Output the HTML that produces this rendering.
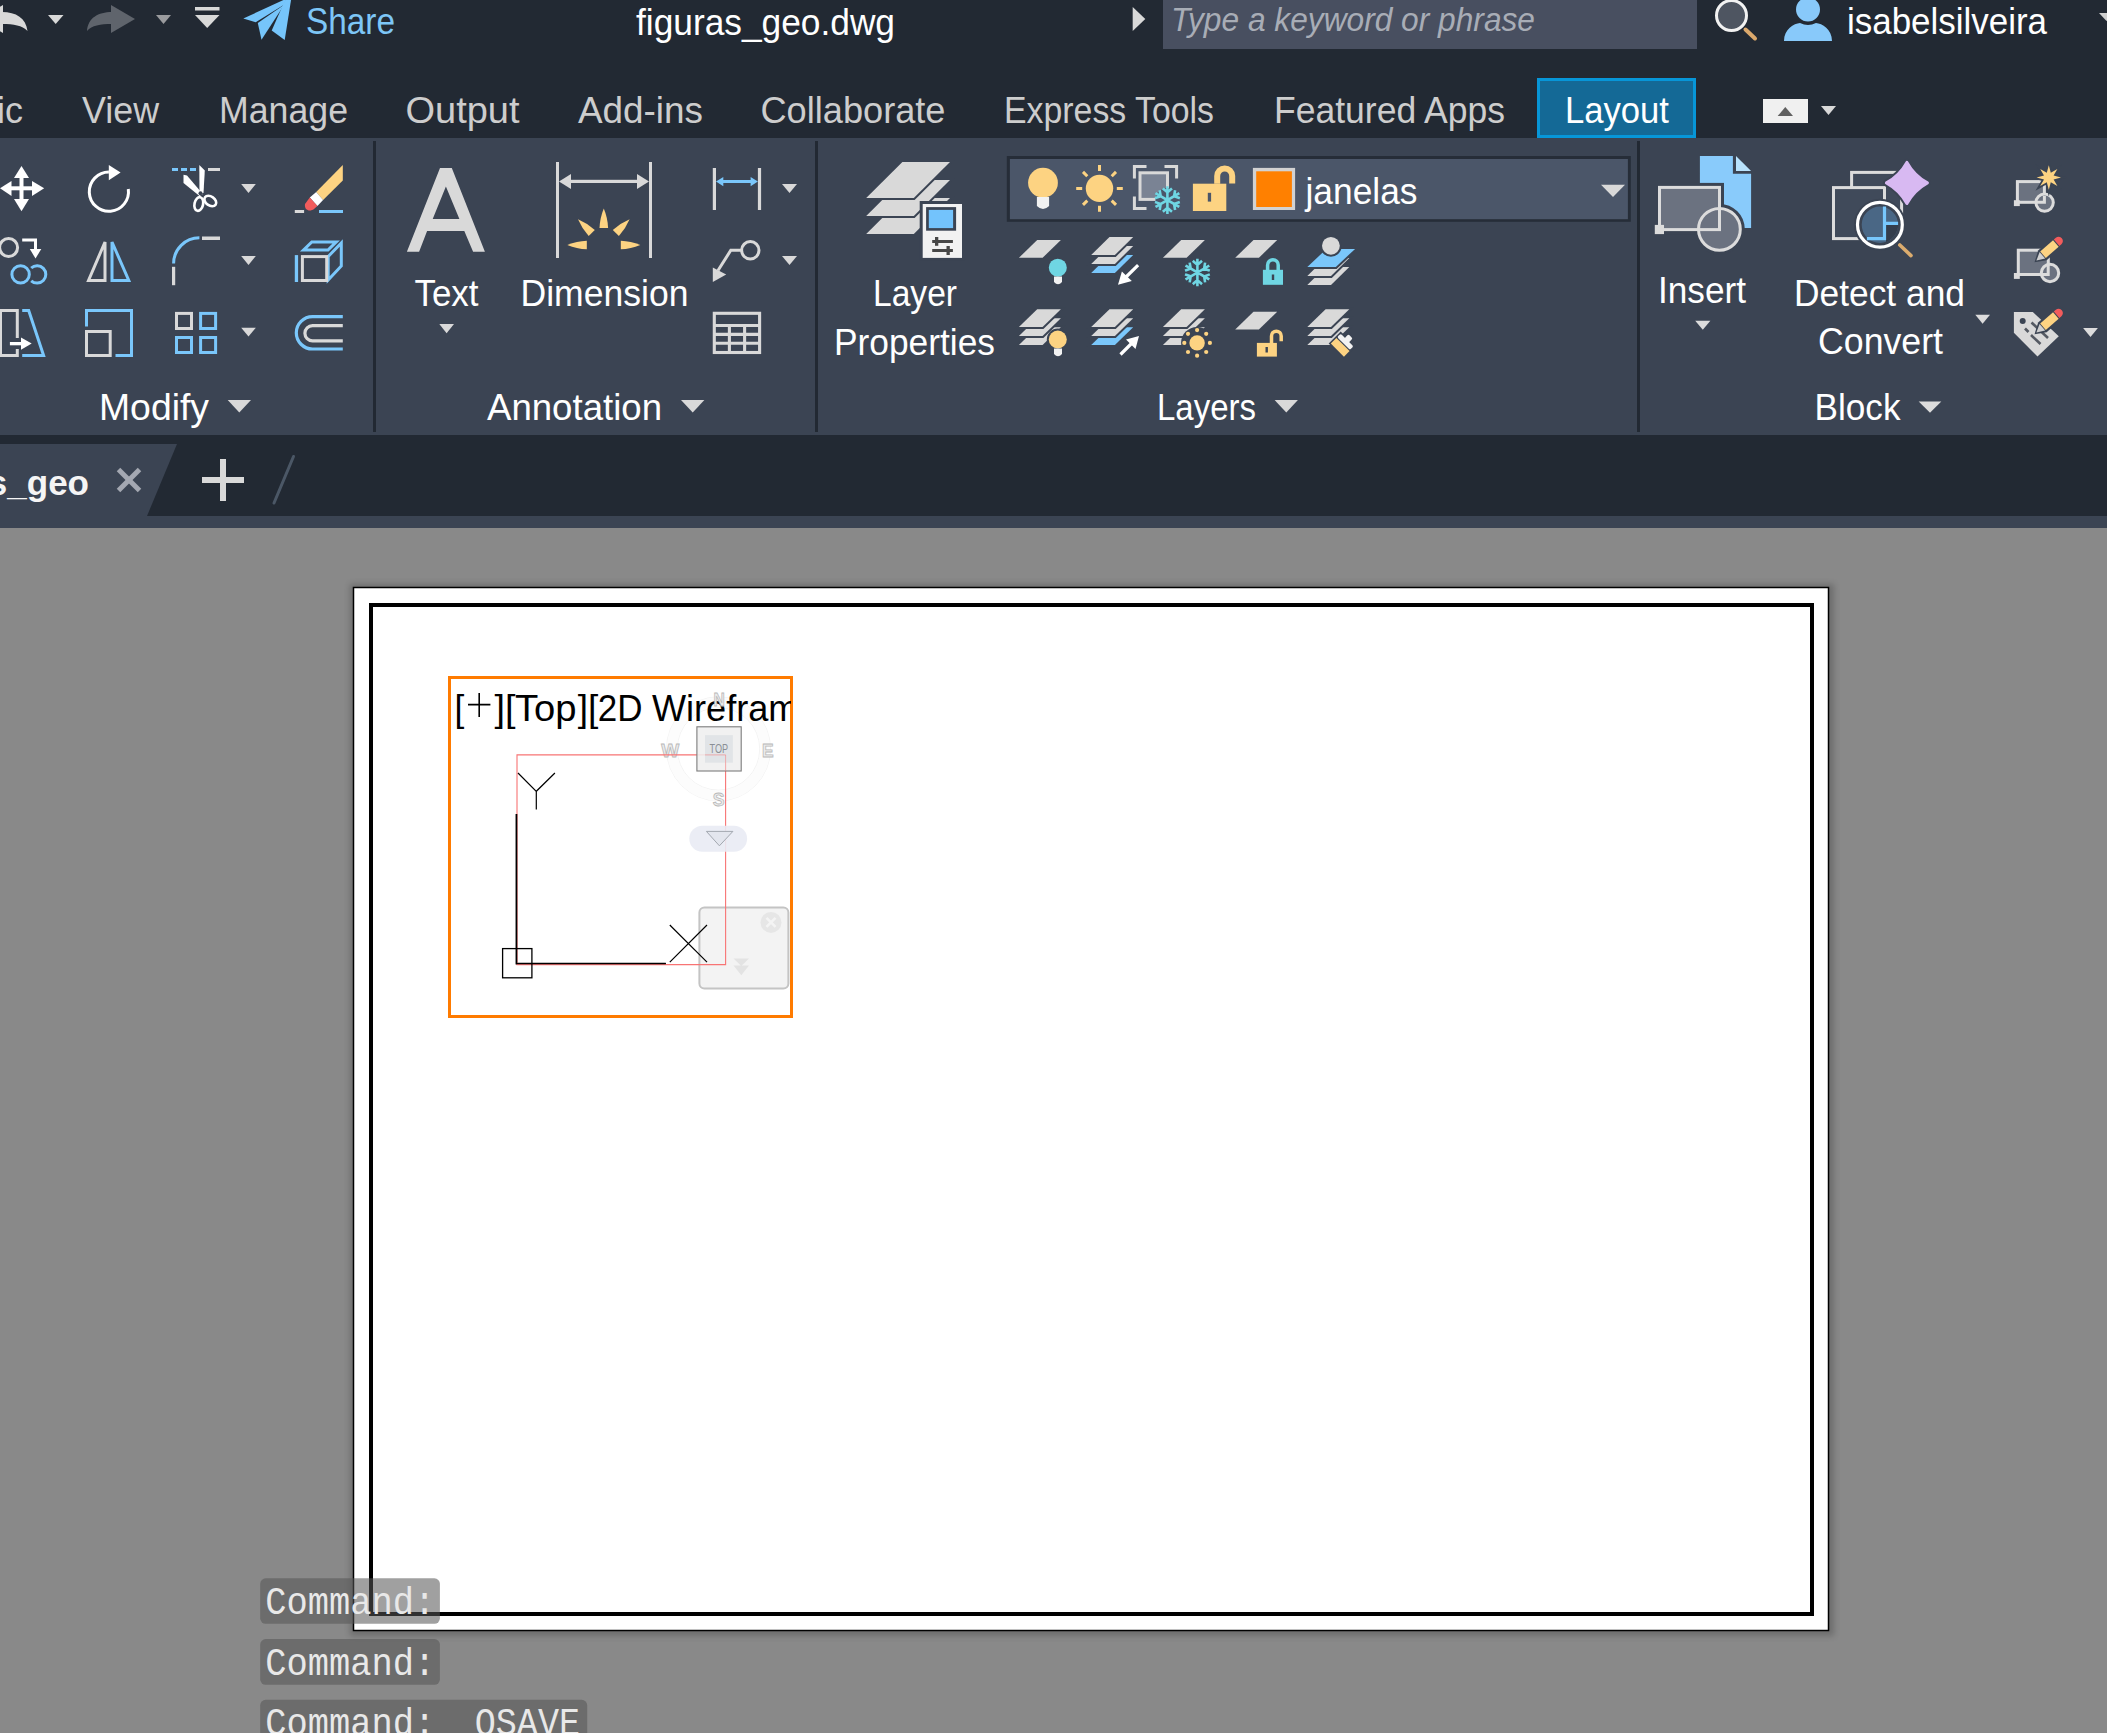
<!DOCTYPE html>
<html><head><meta charset="utf-8">
<style>
html,body{margin:0;padding:0;width:2107px;height:1733px;overflow:hidden;background:#898989;}
svg{position:absolute;left:0;top:0;display:block}
text{font-family:"Liberation Sans",sans-serif}
.mono text{font-family:"Liberation Mono",monospace}
</style></head>
<body>
<svg width="2107" height="1733" viewBox="0 0 2107 1733">
<defs>
  <filter id="sh" x="-5%" y="-5%" width="110%" height="110%"><feGaussianBlur stdDeviation="3"/></filter>
</defs>
<!-- backgrounds -->
<rect x="0" y="0" width="2107" height="138" fill="#222933"/>
<rect x="0" y="138" width="2107" height="297" fill="#3b4453"/>
<rect x="0" y="435" width="2107" height="81" fill="#222933"/>
<rect x="0" y="516" width="2107" height="12" fill="#3b4453"/>
<rect x="0" y="528" width="2107" height="1205" fill="#898989"/>


<!-- title row -->
<g id="title">
<text x="306" y="34" font-size="37" fill="#7dc6f7" textLength="89" lengthAdjust="spacingAndGlyphs">Share</text>
<text x="636" y="34.5" font-size="36" fill="#ffffff" textLength="259" lengthAdjust="spacingAndGlyphs">figuras_geo.dwg</text>
<rect x="1163" y="0" width="534" height="49" fill="#484f60"/>
<text x="1171" y="30.5" font-size="34" font-style="italic" fill="#a8adb6" textLength="364" lengthAdjust="spacingAndGlyphs">Type a keyword or phrase</text>
<text x="1847" y="34" font-size="36" fill="#ffffff" textLength="200" lengthAdjust="spacingAndGlyphs">isabelsilveira</text>
</g>
<!-- tabs -->
<g id="tabs" font-size="37.5" fill="#cdcdcd">
<text x="-3" y="123" textLength="26" lengthAdjust="spacingAndGlyphs">ic</text>
<text x="82" y="123" textLength="77" lengthAdjust="spacingAndGlyphs">View</text>
<text x="219" y="123" textLength="129" lengthAdjust="spacingAndGlyphs">Manage</text>
<text x="405.5" y="123" textLength="114" lengthAdjust="spacingAndGlyphs">Output</text>
<text x="578" y="123" textLength="125" lengthAdjust="spacingAndGlyphs">Add-ins</text>
<text x="760.5" y="123" textLength="185" lengthAdjust="spacingAndGlyphs">Collaborate</text>
<text x="1004" y="123" textLength="210" lengthAdjust="spacingAndGlyphs">Express Tools</text>
<text x="1274" y="123" textLength="231" lengthAdjust="spacingAndGlyphs">Featured Apps</text>
<rect x="1538.5" y="79.5" width="156" height="57" fill="#146996" stroke="#0796d8" stroke-width="3"/>
<text x="1565" y="123" fill="#ffffff" textLength="104" lengthAdjust="spacingAndGlyphs">Layout</text>
</g>
<!-- ribbon labels -->
<g id="labels" font-size="37" fill="#ffffff">
<text x="414.5" y="306" textLength="64" lengthAdjust="spacingAndGlyphs">Text</text>
<text x="520.5" y="306" textLength="168" lengthAdjust="spacingAndGlyphs">Dimension</text>
<text x="873" y="306" textLength="84" lengthAdjust="spacingAndGlyphs">Layer</text>
<text x="834" y="354.5" textLength="161" lengthAdjust="spacingAndGlyphs">Properties</text>
<text x="1658" y="302.5" textLength="88" lengthAdjust="spacingAndGlyphs">Insert</text>
<text x="1794" y="305.7" textLength="171" lengthAdjust="spacingAndGlyphs">Detect and</text>
<text x="1818" y="354" textLength="125" lengthAdjust="spacingAndGlyphs">Convert</text>
<text x="99" y="419.5" textLength="110" lengthAdjust="spacingAndGlyphs">Modify</text>
<text x="487" y="419.5" textLength="175" lengthAdjust="spacingAndGlyphs">Annotation</text>
<text x="1157" y="419.5" textLength="99" lengthAdjust="spacingAndGlyphs">Layers</text>
<text x="1814.5" y="419.6" textLength="86" lengthAdjust="spacingAndGlyphs">Block</text>
</g>


<!-- title icons -->
<g id="ticons">
  <path d="M3,5 L-21,19 L3,33 Z" fill="#d9d9d9"/>
  <path d="M2,12 C16,12 26,18 27.5,31 C22,25.5 14,24 2,24 Z" fill="#d9d9d9"/>
  <path d="M48,15 L63.5,15 L55.7,24 Z" fill="#d9d9d9"/>
  <path d="M111,5 L135,19 L111,33 Z" fill="#5f646c"/>
  <path d="M112,12 C98,12 88,18 87,31 C92,25.5 100,24 112,24 Z" fill="#5f646c"/>
  <path d="M156,15 L171,15 L163.5,24 Z" fill="#9a9b9e"/>
  <rect x="195" y="7" width="24.5" height="3.5" fill="#d9d9d9"/>
  <path d="M195,15 L219.5,15 L207.2,28 Z" fill="#d9d9d9"/>
  <g fill="#76c5fb">
    <path d="M243.3,18.5 L285.6,-1 L284.4,4.6 L255.7,22.2 Z"/>
    <path d="M257.8,23.1 L284.2,4.8 L261.5,39.8 Z"/>
    <path d="M271.7,30.6 L285.6,-1 L291.2,-1 L284.7,40.1 Z"/>
  </g>
  <path d="M1132.7,7 L1145.3,19 L1132.7,31 Z" fill="#d9d9d9"/>
  <circle cx="1731.5" cy="15.5" r="15" fill="#4e5561" stroke="#f2f2f2" stroke-width="3"/>
  <line x1="1745.5" y1="29.5" x2="1755" y2="38.5" stroke="#dba86c" stroke-width="4" stroke-linecap="round"/>
  <circle cx="1808" cy="9.5" r="12" fill="#88c9fa"/>
  <path d="M1784,41 C1784,29 1794,23.5 1800,23 Q1808,27 1816,23 C1822,23.5 1832,29 1832,41 Z" fill="#88c9fa"/>
  <path d="M2099,13 L2114,13 L2106.5,21 Z" fill="#d0d0d0"/>
  <rect x="1763" y="99" width="45" height="24" fill="#f0f0f0"/>
  <path d="M1777.7,116 L1793,116 L1785.3,107 Z" fill="#606060"/>
  <path d="M1821,106 L1836,106 L1828.5,115 Z" fill="#d9d9d9"/>
</g>
<!-- separators -->
<rect x="373" y="141" width="3" height="291" fill="#222933"/>
<rect x="815" y="141" width="3" height="291" fill="#222933"/>
<rect x="1637" y="141" width="3" height="291" fill="#222933"/>
<!-- doc tab -->
<g id="doctab">
  <path d="M0,444 L177,444 L147,516 L0,516 Z" fill="#3b4453"/>
  <text x="89" y="495" font-size="35" font-weight="bold" fill="#f5f5f5" text-anchor="end">s_geo</text>
  <g stroke="#a4a8b2" stroke-width="5">
    <line x1="118.5" y1="469.5" x2="139.5" y2="490.5"/>
    <line x1="139.5" y1="469.5" x2="118.5" y2="490.5"/>
  </g>
  <rect x="220" y="459" width="6" height="42" fill="#d9d9d9"/>
  <rect x="202" y="477" width="42" height="6" fill="#d9d9d9"/>
  <line x1="293.5" y1="456.5" x2="274" y2="503" stroke="#4b5766" stroke-width="3" stroke-linecap="round"/>
</g>


<!-- modify icons -->
<g id="modify">
  <!-- move -->
  <g fill="#ffffff">
    <rect x="19.5" y="176" width="4" height="25"/>
    <rect x="9" y="186.3" width="25" height="4"/>
    <path d="M21.5,165.9 L29,178 L14,178 Z"/>
    <path d="M21.5,211.2 L29,199 L14,199 Z"/>
    <path d="M0,188.3 L11.5,181 L11.5,196 Z"/>
    <path d="M44.2,188.3 L32,181 L32,196 Z"/>
  </g>
  <!-- rotate -->
  <path d="M108.9,172.1 A19.6,19.6 0 1 0 128.3,189" fill="none" stroke="#ffffff" stroke-width="3"/>
  <path d="M108.8,165 L120.6,172.6 L108.8,180.2 Z" fill="#ffffff"/>
  <!-- trim -->
  <g fill="#7ac7fb">
    <rect x="172" y="168" width="6" height="3"/><rect x="181" y="168" width="6" height="3"/><rect x="190" y="168" width="6" height="3"/>
  </g>
  <rect x="208" y="168" width="12" height="3" fill="#d9d9d9"/>
  <g fill="#ffffff">
    <path d="M199.3,165 L204.8,170.5 L203.5,193 L199.5,193 Z"/>
    <path d="M183.5,174.8 L187,175.5 L202.8,194 L199.5,196 L183.5,183 Z"/>
  </g>
  <g fill="none" stroke="#ffffff" stroke-width="2.6">
    <ellipse cx="198.8" cy="204" rx="4.3" ry="7" transform="rotate(12 198.8 204)"/>
    <ellipse cx="210.3" cy="201" rx="4.5" ry="6.5" transform="rotate(-55 210.3 201)"/>
  </g>
  <circle cx="200.5" cy="193.2" r="2" fill="#3b4453"/>
  <!-- erase -->
  <path d="M316.2,191.9 L342.8,165 L342.8,180.5 L323.1,200.1 Z" fill="#fdd382"/>
  <path d="M309.8,197.6 L316.2,191.9 L323.1,200.1 L317.4,205.9 Z" fill="#ffffff"/>
  <path d="M309.8,197.6 L317.4,205.9 L314,209 C310,212 304,210.5 305,204 Z" fill="#f25c5c"/>
  <rect x="294.8" y="210" width="9.3" height="3" fill="#d9d9d9"/>
  <rect x="319" y="210" width="24" height="3" fill="#7ac7fb"/>
  <!-- copy -->
  <circle cx="8.6" cy="247.5" r="9" fill="none" stroke="#d9d9d9" stroke-width="3"/>
  <path d="M22.2,240 L35.5,240 L35.5,250" fill="none" stroke="#ffffff" stroke-width="3"/>
  <path d="M29.8,249 L41.3,249 L35.5,258.5 Z" fill="#ffffff"/>
  <circle cx="20.6" cy="274.4" r="8.7" fill="none" stroke="#7ac7fb" stroke-width="3"/>
  <path d="M31.2,268 A8.7,8.7 0 1 1 31.2,280.8" fill="none" stroke="#7ac7fb" stroke-width="3"/>
  <!-- mirror -->
  <path d="M105,242 L105,280.5 L88.5,280.5 Z" fill="none" stroke="#d9d9d9" stroke-width="3" stroke-linejoin="miter"/>
  <path d="M112,242 L112,280.5 L128.8,280.5 Z" fill="none" stroke="#7ac7fb" stroke-width="3"/>
  <!-- fillet -->
  <path d="M173.6,263.6 A25.8,25.8 0 0 1 199.4,237.8" fill="none" stroke="#7ac7fb" stroke-width="3"/>
  <rect x="202" y="236.5" width="18" height="3.5" fill="#d9d9d9"/>
  <rect x="172" y="266.8" width="3.2" height="18.4" fill="#d9d9d9"/>
  <!-- 3d -->
  <path d="M303.5,250.1 L311.8,241.9 L336.3,241.9 L328,250.1 Z" fill="none" stroke="#7ac7fb" stroke-width="3"/>
  <path d="M328.2,280 L328.2,256.5 L341.3,243 L341.3,266 Z" fill="none" stroke="#7ac7fb" stroke-width="3"/>
  <rect x="294.8" y="255.1" width="3.3" height="26.9" fill="#7ac7fb"/>
  <rect x="302.4" y="256.6" width="24.3" height="23.9" fill="none" stroke="#d9d9d9" stroke-width="3"/>
  <!-- stretch -->
  <path d="M17.3,338 L17.3,310.5 L0.5,310.5 L0.5,355.5 L17.3,355.5 L17.3,349" fill="none" stroke="#d9d9d9" stroke-width="3"/>
  <rect x="9.9" y="342" width="12" height="3.3" fill="#ffffff"/>
  <path d="M31.7,343.6 L21,337.5 L21,349.7 Z" fill="#ffffff"/>
  <path d="M22.2,310.5 L28.7,310.5 L43.6,355.5 L22.2,355.5" fill="none" stroke="#7ac7fb" stroke-width="3"/>
  <!-- scale -->
  <path d="M86.5,326.5 L86.5,310.5 L131.5,310.5 L131.5,355.5 L115.5,355.5" fill="none" stroke="#7ac7fb" stroke-width="3"/>
  <rect x="86.5" y="331.5" width="23.7" height="24" fill="none" stroke="#d9d9d9" stroke-width="3"/>
  <!-- array -->
  <rect x="176.5" y="313.4" width="15" height="15.1" fill="none" stroke="#d9d9d9" stroke-width="3"/>
  <rect x="200.6" y="313.4" width="15" height="15.1" fill="none" stroke="#7ac7fb" stroke-width="3"/>
  <rect x="176.5" y="337.5" width="15" height="15" fill="none" stroke="#7ac7fb" stroke-width="3"/>
  <rect x="200.6" y="337.5" width="15" height="15" fill="none" stroke="#7ac7fb" stroke-width="3"/>
  <!-- offset -->
  <path d="M342.8,316.6 L312.5,316.6 A16.2,16.2 0 0 0 312.5,349 L342.8,349" fill="none" stroke="#7ac7fb" stroke-width="3.2"/>
  <path d="M342.8,325.6 L312.5,325.6 A7.6,7.6 0 0 0 312.5,340.8 L342.8,340.8" fill="none" stroke="#d9d9d9" stroke-width="3.2"/>
  <!-- dropdowns -->
  <g fill="#d9d9d9">
    <path d="M241.2,184 L255.8,184 L248.5,193 Z"/>
    <path d="M241.2,256 L255.8,256 L248.5,265 Z"/>
    <path d="M241.2,327.7 L255.8,327.7 L248.5,336.6 Z"/>
    <path d="M227.7,400 L251,400 L239.3,412.4 Z"/>
  </g>
</g>


<!-- annotation icons -->
<g id="annot">
  <path d="M406.9,251.8 L440,168 L451.8,168 L484.9,251.8 L473.1,251.8 L464.3,230.9 L427.1,230.9 L419.1,251.8 Z M432.7,218.9 L459.4,218.9 L445.9,186.5 Z" fill="#d9d9d9" fill-rule="evenodd"/>
  <path d="M439.3,324 L454,324 L446.6,333.2 Z" fill="#d9d9d9"/>
  <rect x="556" y="162" width="3" height="96" fill="#d9d9d9"/>
  <rect x="649" y="162" width="3" height="96" fill="#d9d9d9"/>
  <rect x="565" y="179.8" width="78" height="3.2" fill="#d9d9d9"/>
  <path d="M559,181.5 L571,174 L571,189 Z" fill="#d9d9d9"/>
  <path d="M649,181.5 L637,174 L637,189 Z" fill="#d9d9d9"/>
  <g fill="#fdd382"><path d="M586.8,240.7 Q576.8,241.1 567.3,245.0 Q576.8,248.9 586.8,249.3 Z"/><path d="M594.8,229.9 Q587.4,223.2 578.0,219.2 Q582.0,228.6 588.7,236.0 Z"/><path d="M608.1,228.0 Q607.7,218.0 603.8,208.5 Q599.9,218.0 599.5,228.0 Z"/><path d="M618.9,236.0 Q625.6,228.6 629.6,219.2 Q620.2,223.2 612.8,229.9 Z"/><path d="M620.8,249.3 Q630.8,248.9 640.3,245.0 Q630.8,241.1 620.8,240.7 Z"/></g>
  <!-- linear dim -->
  <rect x="712.8" y="168" width="3.2" height="42" fill="#d9d9d9"/>
  <rect x="757.9" y="168" width="3.2" height="42" fill="#d9d9d9"/>
  <rect x="720" y="180" width="31" height="3" fill="#7ac7fb"/>
  <path d="M716,181.5 L723.3,176.9 L723.3,186.2 Z" fill="#7ac7fb"/>
  <path d="M757.9,181.5 L750.6,176.9 L750.6,186.2 Z" fill="#7ac7fb"/>
  <!-- leader -->
  <circle cx="750.3" cy="250.3" r="8.7" fill="none" stroke="#d9d9d9" stroke-width="3"/>
  <path d="M741.6,250.3 L730.8,250.3 L718,270.5" fill="none" stroke="#d9d9d9" stroke-width="3"/>
  <path d="M712.8,267.4 L712.8,282 L726.2,274.4 Z" fill="#d9d9d9"/>
  <!-- table -->
  <g fill="none" stroke="#d9d9d9" stroke-width="3.1">
    <rect x="714.3" y="313.3" width="45.3" height="39.2"/>
    <line x1="714.3" y1="325.5" x2="759.6" y2="325.5"/>
    <line x1="714.3" y1="334.4" x2="759.6" y2="334.4"/>
    <line x1="714.3" y1="343.3" x2="759.6" y2="343.3"/>
    <line x1="729.4" y1="325.5" x2="729.4" y2="352.5"/>
    <line x1="744.6" y1="325.5" x2="744.6" y2="352.5"/>
  </g>
  <g fill="#d9d9d9">
    <path d="M782,184 L797,184 L789.5,193 Z"/>
    <path d="M782,256 L797,256 L789.5,265 Z"/>
    <path d="M681,400 L704.4,400 L692.7,412.4 Z"/>
  </g>
</g>


<!-- layers group -->
<g id="layers">
  <!-- layer properties -->
  <path d="M866.2,234.0 L902.4,198.1 L950.0,198.1 L913.8,234.0 Z" fill="#d9d9d9" stroke="#3b4453" stroke-width="4" paint-order="stroke"/>
  <path d="M866.2,216.0 L902.4,180.1 L950.0,180.1 L913.8,216.0 Z" fill="#d9d9d9" stroke="#3b4453" stroke-width="4" paint-order="stroke"/>
  <path d="M866.2,198.0 L902.4,162.1 L950.0,162.1 L913.8,198.0 Z" fill="#d9d9d9" stroke="#3b4453" stroke-width="4" paint-order="stroke"/>
  <rect x="922.7" y="204" width="39.3" height="53.9" fill="#f2f2f2" stroke="#3b4453" stroke-width="6" paint-order="stroke"/>
  <rect x="926.1" y="207.1" width="30" height="23.6" fill="#3b4453"/>
  <rect x="928.8" y="209.9" width="24.3" height="18.2" fill="#73c3fc"/>
  <g fill="#474747">
    <rect x="932.2" y="240" width="20.7" height="3"/>
    <rect x="935" y="237" width="3.3" height="8.8"/>
    <rect x="932.2" y="249" width="20.7" height="3"/>
    <rect x="946.5" y="246" width="3.3" height="9"/>
  </g>
  <!-- dropdown -->
  <rect x="1006.8" y="156" width="624" height="65.8" fill="#262d38"/>
  <rect x="1009.9" y="159" width="618" height="60.2" fill="#4b5669"/>
  <circle cx="1043" cy="182.7" r="14.9" fill="#fdd382"/>
  <path d="M1036.9,197 L1049.1,197 L1049.1,206 Q1043,212 1036.9,206 Z" fill="#f2f2f2"/>
  <circle cx="1099.5" cy="188.4" r="13.7" fill="#fdd382"/>
  <path d="M1116.8,188.4 L1122.8,188.4 M1111.7,200.6 L1116.0,204.9 M1099.5,205.7 L1099.5,211.7 M1087.3,200.6 L1083.0,204.9 M1082.2,188.4 L1076.2,188.4 M1087.3,176.2 L1083.0,171.9 M1099.5,171.1 L1099.5,165.1 M1111.7,176.2 L1116.0,171.9" stroke="#fdd382" stroke-width="3"/>
  <path d="M1132.9,177 L1132.9,164.9 L1145,164.9 M1163,164.9 L1175.1,164.9 L1175.1,177 M1132.9,195 L1132.9,207 L1145,207" fill="none" stroke="#d9d9d9" stroke-width="3" transform="translate(1.5,1.5)"/>
  <rect x="1140" y="172.8" width="27.5" height="26.6" fill="#7a8394" stroke="#d9d9d9" stroke-width="3"/>
  <circle cx="1167.4" cy="200.1" r="12" fill="#4b5669"/>
  <path d="M1167.4,187.6 L1167.4,212.6 M1178.2,193.8 L1156.6,206.3 M1178.2,206.3 L1156.6,193.8 M1167.4,207.8 L1163.8,210.9 M1167.4,207.8 L1171.0,210.9 M1160.7,204.0 L1156.2,202.4 M1160.7,204.0 L1159.9,208.7 M1160.7,196.2 L1159.9,191.5 M1160.7,196.2 L1156.2,197.8 M1167.4,192.3 L1171.0,189.3 M1167.4,192.3 L1163.8,189.3 M1174.1,196.2 L1178.6,197.8 M1174.1,196.2 L1174.9,191.5 M1174.1,204.0 L1174.9,208.7 M1174.1,204.0 L1178.6,202.4" fill="none" stroke="#6fd6e3" stroke-width="2.6" stroke-linecap="square"/>
  <path d="M1217.2,183.7 L1217.2,176 A7.5,7.5 0 0 1 1232.2,176 L1232.2,183.4" fill="none" stroke="#fdd382" stroke-width="6"/>
  <rect x="1192.9" y="183.7" width="33.4" height="27.3" fill="#fdd382"/>
  <rect x="1207.8" y="192.8" width="3.3" height="8.8" fill="#4b5669"/>
  <rect x="1252.9" y="167.9" width="42.2" height="42.1" fill="#d2d2d2"/>
  <rect x="1256.2" y="171.3" width="35.7" height="35.7" fill="#ff8000"/>
  <text x="1305.5" y="203.8" font-size="36.5" fill="#ffffff" textLength="112" lengthAdjust="spacingAndGlyphs">janelas</text>
  <path d="M1601,184.7 L1625,184.7 L1613,197 Z" fill="#d9d9d9"/>
  <!-- small layer icons row 1 -->
  <path d="M1018.9,257.8 L1037.2,240.0 L1060.9,240.0 L1042.6,257.8 Z" fill="#d9d9d9"/>
  <circle cx="1057.8" cy="267.7" r="9" fill="#6fd6e3"/>
  <path d="M1054,276.5 L1062,276.5 L1062,282 Q1058,286.5 1054,282 Z" fill="#f2f2f2"/>
  <path d="M1091.2,272.9 L1109.5,255.1 L1133.2,255.1 L1114.9,272.9 Z" fill="#7ac7fb" stroke="#3b4453" stroke-width="4" paint-order="stroke"/><path d="M1091.2,263.9 L1109.5,246.1 L1133.2,246.1 L1114.9,263.9 Z" fill="#d9d9d9" stroke="#3b4453" stroke-width="4" paint-order="stroke"/><path d="M1091.2,254.9 L1109.5,237.1 L1133.2,237.1 L1114.9,254.9 Z" fill="#d9d9d9" stroke="#3b4453" stroke-width="4" paint-order="stroke"/>
  <path d="M1138.1,265.2 L1125,278" stroke="#ffffff" stroke-width="3.2"/>
  <path d="M1118,284.8 L1121.9,271.5 L1131.8,281 Z" fill="#ffffff"/>
  <path d="M1162.9,257.8 L1181.2,240.0 L1204.9,240.0 L1186.6,257.8 Z" fill="#d9d9d9"/>
  <path d="M1197.4,260.0 L1197.4,285.0 M1208.2,266.2 L1186.6,278.8 M1208.2,278.8 L1186.6,266.2 M1197.4,280.2 L1193.8,283.3 M1197.4,280.2 L1201.0,283.3 M1190.7,276.4 L1186.2,274.8 M1190.7,276.4 L1189.9,281.1 M1190.7,268.6 L1189.9,263.9 M1190.7,268.6 L1186.2,270.2 M1197.4,264.8 L1201.0,261.7 M1197.4,264.8 L1193.8,261.7 M1204.1,268.6 L1208.6,270.2 M1204.1,268.6 L1204.9,263.9 M1204.1,276.4 L1204.9,281.1 M1204.1,276.4 L1208.6,274.8" fill="none" stroke="#6fd6e3" stroke-width="2.6" stroke-linecap="square"/>
  <path d="M1235.2,257.8 L1253.5,240.0 L1277.2,240.0 L1258.9,257.8 Z" fill="#d9d9d9"/>
  <path d="M1267.6,270 L1267.6,265 A5.3,5.3 0 0 1 1278.2,265 L1278.2,270" fill="none" stroke="#6fd6e3" stroke-width="3.5"/>
  <rect x="1262.9" y="269.8" width="20.1" height="15" fill="#6fd6e3"/>
  <rect x="1271.8" y="274.5" width="2.4" height="5.5" fill="#3b4453"/>
  <path d="M1307.3,284.9 L1325.6,267.1 L1349.3,267.1 L1331.0,284.9 Z" fill="#d9d9d9" stroke="#3b4453" stroke-width="4" paint-order="stroke"/>
  <path d="M1307.3,275.9 L1325.6,258.1 L1349.3,258.1 L1331.0,275.9 Z" fill="#d9d9d9" stroke="#3b4453" stroke-width="4" paint-order="stroke"/>
  <path d="M1307.3,266.9 L1326.6,248.9 L1355.1,248.9 L1335.8,266.9 Z" fill="#7ac7fb" stroke="#3b4453" stroke-width="4" paint-order="stroke"/>
  <circle cx="1330.9" cy="245.8" r="8.9" fill="#d9d9d9" stroke="#3b4453" stroke-width="4" paint-order="stroke"/>
  <!-- row 2 -->
  <path d="M1018.9,345.0 L1037.2,327.2 L1060.9,327.2 L1042.6,345.0 Z" fill="#d9d9d9" stroke="#3b4453" stroke-width="4" paint-order="stroke"/><path d="M1018.9,336.0 L1037.2,318.2 L1060.9,318.2 L1042.6,336.0 Z" fill="#d9d9d9" stroke="#3b4453" stroke-width="4" paint-order="stroke"/><path d="M1018.9,327.0 L1037.2,309.2 L1060.9,309.2 L1042.6,327.0 Z" fill="#d9d9d9" stroke="#3b4453" stroke-width="4" paint-order="stroke"/>
  <circle cx="1057.8" cy="339.5" r="9" fill="#fdd382" stroke="#3b4453" stroke-width="4" paint-order="stroke"/>
  <path d="M1054,348.5 L1062,348.5 L1062,354 Q1058,358.5 1054,354 Z" fill="#f2f2f2"/>
  <path d="M1091.2,345.0 L1109.5,327.2 L1133.2,327.2 L1114.9,345.0 Z" fill="#7ac7fb" stroke="#3b4453" stroke-width="4" paint-order="stroke"/><path d="M1091.2,336.0 L1109.5,318.2 L1133.2,318.2 L1114.9,336.0 Z" fill="#d9d9d9" stroke="#3b4453" stroke-width="4" paint-order="stroke"/><path d="M1091.2,327.0 L1109.5,309.2 L1133.2,309.2 L1114.9,327.0 Z" fill="#d9d9d9" stroke="#3b4453" stroke-width="4" paint-order="stroke"/>
  <path d="M1120.5,354.5 L1133,342" stroke="#ffffff" stroke-width="3.2"/>
  <path d="M1139,336 L1126,339.5 L1135.5,349 Z" fill="#ffffff"/>
  <path d="M1162.9,345.0 L1181.2,327.2 L1204.9,327.2 L1186.6,345.0 Z" fill="#d9d9d9" stroke="#3b4453" stroke-width="4" paint-order="stroke"/><path d="M1162.9,336.0 L1181.2,318.2 L1204.9,318.2 L1186.6,336.0 Z" fill="#d9d9d9" stroke="#3b4453" stroke-width="4" paint-order="stroke"/><path d="M1162.9,327.0 L1181.2,309.2 L1204.9,309.2 L1186.6,327.0 Z" fill="#d9d9d9" stroke="#3b4453" stroke-width="4" paint-order="stroke"/>
  <circle cx="1197.1" cy="342.9" r="16" fill="#3b4453"/>
  <circle cx="1197.1" cy="342.9" r="7.7" fill="#fdd382"/>
  <circle cx="1209.9" cy="342.9" r="2.1" fill="#fdd382"/><circle cx="1206.2" cy="352.0" r="2.1" fill="#fdd382"/><circle cx="1197.1" cy="355.7" r="2.1" fill="#fdd382"/><circle cx="1188.0" cy="352.0" r="2.1" fill="#fdd382"/><circle cx="1184.3" cy="342.9" r="2.1" fill="#fdd382"/><circle cx="1188.0" cy="333.8" r="2.1" fill="#fdd382"/><circle cx="1197.1" cy="330.1" r="2.1" fill="#fdd382"/><circle cx="1206.2" cy="333.8" r="2.1" fill="#fdd382"/>
  <path d="M1235.2,329.6 L1253.5,311.8 L1277.2,311.8 L1258.9,329.6 Z" fill="#d9d9d9"/>
  <path d="M1271.5,343 L1271.5,336 A4.85,4.85 0 0 1 1281.2,336 L1281.2,341.2" fill="none" stroke="#fdd382" stroke-width="3.5"/>
  <rect x="1256.9" y="342.9" width="20" height="13.7" fill="#fdd382"/>
  <rect x="1265.5" y="347" width="2.4" height="5.5" fill="#3b4453"/>
  <path d="M1307.3,345.0 L1325.6,327.2 L1349.3,327.2 L1331.0,345.0 Z" fill="#d9d9d9" stroke="#3b4453" stroke-width="4" paint-order="stroke"/><path d="M1307.3,336.0 L1325.6,318.2 L1349.3,318.2 L1331.0,336.0 Z" fill="#d9d9d9" stroke="#3b4453" stroke-width="4" paint-order="stroke"/><path d="M1307.3,327.0 L1325.6,309.2 L1349.3,309.2 L1331.0,327.0 Z" fill="#d9d9d9" stroke="#3b4453" stroke-width="4" paint-order="stroke"/>
  <g transform="translate(1330.8,343.5) rotate(45)">
    <path d="M-1.5,1.5 L20,1.5 L20,-20.5 L4.5,-20.5 L4.5,-15.5 L-1.5,-15.5 Z" fill="#3b4453"/>
    <rect x="0" y="-7.9" width="18.6" height="7.9" fill="#fdd382"/>
    <rect x="0" y="-14" width="18" height="5" rx="1.5" fill="#f2f2f2"/>
    <rect x="6" y="-19" width="6" height="6" rx="1.5" fill="#f2f2f2"/>
  </g>
  <path d="M1274.6,400 L1297.9,400 L1286.3,412.4 Z" fill="#d9d9d9"/>
</g>


<!-- block group -->
<g id="block">
  <!-- insert -->
  <path d="M1699.9,156 L1732.9,156 L1732.9,173.8 L1751.1,173.8 L1751.1,227.9 L1699.9,227.9 Z" fill="#89cbfb"/>
  <path d="M1736,156 L1736,170.9 L1751.1,170.9 Z" fill="#b9e3fd"/>
  <rect x="1659.5" y="187.4" width="60" height="42.2" fill="#3b4453" stroke="#3b4453" stroke-width="9"/>
  <circle cx="1719.4" cy="229.3" r="20.9" fill="#3b4453" stroke="#3b4453" stroke-width="9"/>
  <rect x="1659.5" y="187.4" width="60" height="42.2" fill="#6b7280"/>
  <circle cx="1719.4" cy="229.3" r="20.9" fill="#6b7280"/>
  <rect x="1659.5" y="187.4" width="60" height="42.2" fill="none" stroke="#dcdcdc" stroke-width="3"/>
  <circle cx="1719.4" cy="229.3" r="20.9" fill="none" stroke="#dcdcdc" stroke-width="3"/>
  <rect x="1654.8" y="224.9" width="9.2" height="9.2" fill="#dcdcdc"/>
  <path d="M1695.2,320.7 L1710.4,320.7 L1702.8,329.7 Z" fill="#dcdcdc"/>
  <!-- detect and convert -->
  <rect x="1851.6" y="172.4" width="50" height="40" fill="#404a5a" stroke="#dcdcdc" stroke-width="3"/>
  <rect x="1833.5" y="187.6" width="51" height="51" fill="#404a5a" stroke="#dcdcdc" stroke-width="3"/>
  <path d="M1906.9,162.4 Q1914.2,175.6 1927.4,182.9 Q1914.2,190.20000000000002 1906.9,203.4 Q1899.6000000000001,190.20000000000002 1886.4,182.9 Q1899.6000000000001,175.6 1906.9,162.4 Z" fill="#d8b9f2" stroke="#3b4453" stroke-width="7" paint-order="stroke" stroke-linejoin="round"/>
  <path d="M1906.9,162.4 Q1914.2,175.6 1927.4,182.9 Q1914.2,190.20000000000002 1906.9,203.4 Q1899.6000000000001,190.20000000000002 1886.4,182.9 Q1899.6000000000001,175.6 1906.9,162.4 Z" fill="#d8b9f2" stroke="#d8b9f2" stroke-width="3" stroke-linejoin="round"/>
  <circle cx="1879.9" cy="224.8" r="26" fill="#3b4453"/>
  <circle cx="1879.9" cy="224.8" r="18.2" fill="#4a6785"/>
  <path d="M1886,224.8 L1898.1,224.8 A18.2,18.2 0 0 1 1886,241.9 Z" fill="#343d4c"/>
  <path d="M1884.5,206.6 L1884.5,238.6 L1866.9,238.6 M1884.5,223.4 L1898.1,223.4" fill="none" stroke="#78c8fd" stroke-width="3.2"/>
  <circle cx="1879.9" cy="224.8" r="22.4" fill="none" stroke="#ffffff" stroke-width="3.2"/>
  <line x1="1899.8" y1="245" x2="1911" y2="255.6" stroke="#dbac6e" stroke-width="3.6" stroke-linecap="round"/>
  <path d="M1975.3,314.8 L1990,314.8 L1982.6,323.8 Z" fill="#dcdcdc"/>
  <!-- create block -->
  <rect x="2017.4" y="181.6" width="27" height="20.7" fill="#6b7280" stroke="#dcdcdc" stroke-width="3"/>
  <circle cx="2044.6" cy="202.6" r="8.7" fill="#6b7280"/>
  <path d="M2044.4,196 L2044.4,202.3 L2036,202.3" fill="none" stroke="#dcdcdc" stroke-width="3"/>
  <circle cx="2044.6" cy="202.6" r="8.7" fill="none" stroke="#dcdcdc" stroke-width="3"/>
  <rect x="2013.9" y="200.2" width="5.9" height="5.9" fill="#dcdcdc"/>
  <path d="M2048.8,165.3 L2050.8,172.7 L2057.4,168.9 L2053.6,175.5 L2061.0,177.5 L2053.6,179.5 L2057.4,186.1 L2050.8,182.3 L2048.8,189.7 L2046.8,182.3 L2040.2,186.1 L2044.0,179.5 L2036.6,177.5 L2044.0,175.5 L2040.2,168.9 L2046.8,172.7 Z" fill="#fdd382" stroke="#3b4453" stroke-width="3.5" paint-order="stroke"/>
  <!-- edit block -->
  <rect x="2018.3" y="250.2" width="30" height="24.3" fill="#6b7280" stroke="#dcdcdc" stroke-width="3"/>
  <circle cx="2050" cy="273" r="8.7" fill="#6b7280"/>
  <path d="M2048.2,264.5 L2048.2,274.5 L2040,274.5" fill="none" stroke="#dcdcdc" stroke-width="3"/>
  <circle cx="2050" cy="273" r="8.7" fill="none" stroke="#dcdcdc" stroke-width="3"/>
  <rect x="2013.9" y="273" width="5.9" height="5.9" fill="#dcdcdc"/>
  <g transform="translate(2036.4,260.6) rotate(-41.4)">
    <path d="M-2.5,0 L8,-6.45 L29.65,-6.45 A6.45,6.45 0 0 1 29.65,6.45 L8,6.45 Z" fill="#3b4453"/>
    <path d="M0,0 L8,-4.25 L8,4.25 Z" fill="#d0d0d0"/>
    <rect x="8.8" y="-4.25" width="17.15" height="8.5" fill="#fdd382"/>
    <path d="M26.95,-4.25 L29.65,-4.25 A4.25,4.25 0 0 1 29.65,4.25 L26.95,4.25 Z" fill="#f25c5c"/>
  </g>
  <!-- attribute -->
  <path d="M2013.9,312 L2032.8,312 L2058.8,336.3 L2037.5,356.4 L2013.9,332.8 Z" fill="#d9d9d9"/>
  <circle cx="2022.7" cy="320.9" r="3" fill="#3b4453"/>
  <g stroke="#555a63" stroke-width="2.6">
    <line x1="2025" y1="328.5" x2="2028.5" y2="332"/>
    <line x1="2031.5" y1="322.5" x2="2048" y2="338"/>
    <line x1="2031" y1="335" x2="2040.5" y2="344"/>
  </g>
  <g transform="translate(2036.4,332.6) rotate(-41.4)">
    <path d="M-2.5,0 L8,-6.45 L29.65,-6.45 A6.45,6.45 0 0 1 29.65,6.45 L8,6.45 Z" fill="#3b4453"/>
    <path d="M0,0 L8,-4.25 L8,4.25 Z" fill="#d0d0d0"/>
    <rect x="8.8" y="-4.25" width="17.15" height="8.5" fill="#fdd382"/>
    <path d="M26.95,-4.25 L29.65,-4.25 A4.25,4.25 0 0 1 29.65,4.25 L26.95,4.25 Z" fill="#f25c5c"/>
  </g>
  <path d="M2083.1,328 L2097.9,328 L2090.5,336.9 Z" fill="#dcdcdc"/>
  <path d="M1918.7,401.5 L1941.3,401.5 L1930,412.8 Z" fill="#dcdcdc"/>
</g>

<!-- paper -->
<g id="paper">
  <rect x="350" y="584" width="1484" height="1052" fill="#000" opacity="0.2" filter="url(#sh)"/>
  <rect x="353.5" y="587.5" width="1475" height="1043" fill="#fff" stroke="#000" stroke-width="1.5"/>
  <rect x="371" y="605" width="1441" height="1009" fill="none" stroke="#000" stroke-width="4"/>
</g>

<!-- viewport -->
<g id="vp">
  <defs><clipPath id="vpclip"><rect x="451" y="679" width="340" height="336"/></clipPath></defs>
  <rect x="449.5" y="677.5" width="342" height="339" fill="#ffffff" stroke="#ff7b00" stroke-width="3"/>
  <g clip-path="url(#vpclip)">
    <circle cx="718.5" cy="748.9" r="52" fill="none" stroke="#f3f3f3" stroke-width="1"/><circle cx="718.5" cy="748.9" r="41.3" fill="none" stroke="#f3f3f3" stroke-width="1"/><circle cx="718.5" cy="748.9" r="46.6" fill="none" stroke="#fcfcfc" stroke-width="10"/>
    <g fill="#000"><text x="454.5" y="720.9" font-size="37.6" textLength="9.8" lengthAdjust="spacingAndGlyphs">[</text><text x="494.6" y="720.9" font-size="37.6" textLength="21.0" lengthAdjust="spacingAndGlyphs">][</text><text x="515.0" y="720.9" font-size="37.6" textLength="61.6" lengthAdjust="spacingAndGlyphs">Top</text><text x="577.8" y="720.9" font-size="37.6" textLength="20.6" lengthAdjust="spacingAndGlyphs">][</text><text x="597.8" y="720.9" font-size="37.6" textLength="44.7" lengthAdjust="spacingAndGlyphs">2D</text><text x="651.9" y="720.9" font-size="37.6" textLength="146.6" lengthAdjust="spacingAndGlyphs">Wirefram</text><path d="M479.2,693 L479.2,717 M468,704.6 L490.4,704.6" stroke="#000" stroke-width="1.6"/></g>
    <g font-family="Liberation Sans" font-weight="bold" font-size="18" fill="#ececec" stroke="#b9b9b9" stroke-width="0.8">
      <text x="713.6" y="706.3" textLength="11.3" lengthAdjust="spacingAndGlyphs">N</text>
      <text x="661.2" y="756.7" textLength="18" lengthAdjust="spacingAndGlyphs">W</text>
      <text x="762" y="756.7" textLength="11.6" lengthAdjust="spacingAndGlyphs">E</text>
      <text x="712.8" y="805.5" textLength="11.8" lengthAdjust="spacingAndGlyphs">S</text>
    </g>
    <rect x="699.4" y="907.4" width="89" height="81" rx="5" fill="#f3f3f3" stroke="#c4c4c4" stroke-width="2"/>
    <path d="M516.5,814 L516.5,963.6 L665.8,963.6" fill="none" stroke="#000" stroke-width="1.6"/>
    <path d="M517,754.9 L725.6,754.9 L725.6,964.6 L517,964.6 Z" fill="none" stroke="#f87474" stroke-width="1.1"/>
    <path d="M516.5,814 L516.5,963.6 L665.8,963.6" fill="none" stroke="#000" stroke-width="1.4"/>
    <rect x="696.9" y="726.8" width="44.3" height="44.2" fill="#efefef" fill-opacity="0.88" stroke="#7c7c7c" stroke-width="1.1"/>
    <rect x="705" y="735.2" width="27.9" height="27.5" fill="#dfe2e6" fill-opacity="0.9"/>
    <path d="M705,754.9 L725.6,754.9 L725.6,771" fill="none" stroke="#f87474" stroke-opacity="0.5" stroke-width="1"/>
    <text x="709.6" y="753" font-size="12.5" fill="#8a8f96" textLength="18.5" lengthAdjust="spacingAndGlyphs">TOP</text>
    <path d="M518,773 L536.3,791.3 L554.9,773 M536.3,791.3 L536.3,809.4" fill="none" stroke="#000" stroke-width="1.2"/>
    <rect x="502.6" y="948.6" width="29.3" height="29.2" fill="none" stroke="#000" stroke-width="1.3"/>
    <path d="M669.8,925 L707,962.1 M707,925 L669.8,962.1" fill="none" stroke="#000" stroke-width="1.2"/>
    <rect x="689.3" y="825.7" width="57.8" height="26" rx="13" fill="#e9ebf4" fill-opacity="0.9"/>
    <path d="M706.4,831.4 L732.9,831.4 L719.4,845.8 Z" fill="#e3e6ee" stroke="#a3a8b0" stroke-width="1"/>
    
    <circle cx="771" cy="922.4" r="10.5" fill="#e6e6e6"/>
    <path d="M766.5,917.9 L775.5,926.9 M775.5,917.9 L766.5,926.9" stroke="#f4f4f4" stroke-width="2.5"/>
    <path d="M733.5,958.4 L749,958.4 L741.3,966 Z M733.5,965.5 L749,965.5 L741.3,975.3 Z" fill="#e3e3e3"/>
  </g>
</g>

<!-- command lines -->
<g id="cmd">
  <rect x="260.2" y="1578.3" width="179.7" height="45.5" rx="5.5" fill="#555555" fill-opacity="0.56"/>
  <rect x="260.2" y="1639.1" width="179.7" height="45.7" rx="5.5" fill="#555555" fill-opacity="0.56"/>
  <rect x="260.2" y="1699.8" width="327" height="60" rx="5.5" fill="#555555" fill-opacity="0.56"/>
  <g class="mono" font-size="38" fill="#e8e8e8">
    <text x="265.2" y="1614" textLength="170" lengthAdjust="spacingAndGlyphs">Command:</text>
    <text x="265.2" y="1674.6" textLength="170" lengthAdjust="spacingAndGlyphs">Command:</text>
    <text x="265.2" y="1735.2" textLength="170" lengthAdjust="spacingAndGlyphs">Command:</text>
    <text x="474.7" y="1735.2" textLength="105.4" lengthAdjust="spacingAndGlyphs">QSAVE</text>
  </g>
</g>
</svg>
</body></html>
